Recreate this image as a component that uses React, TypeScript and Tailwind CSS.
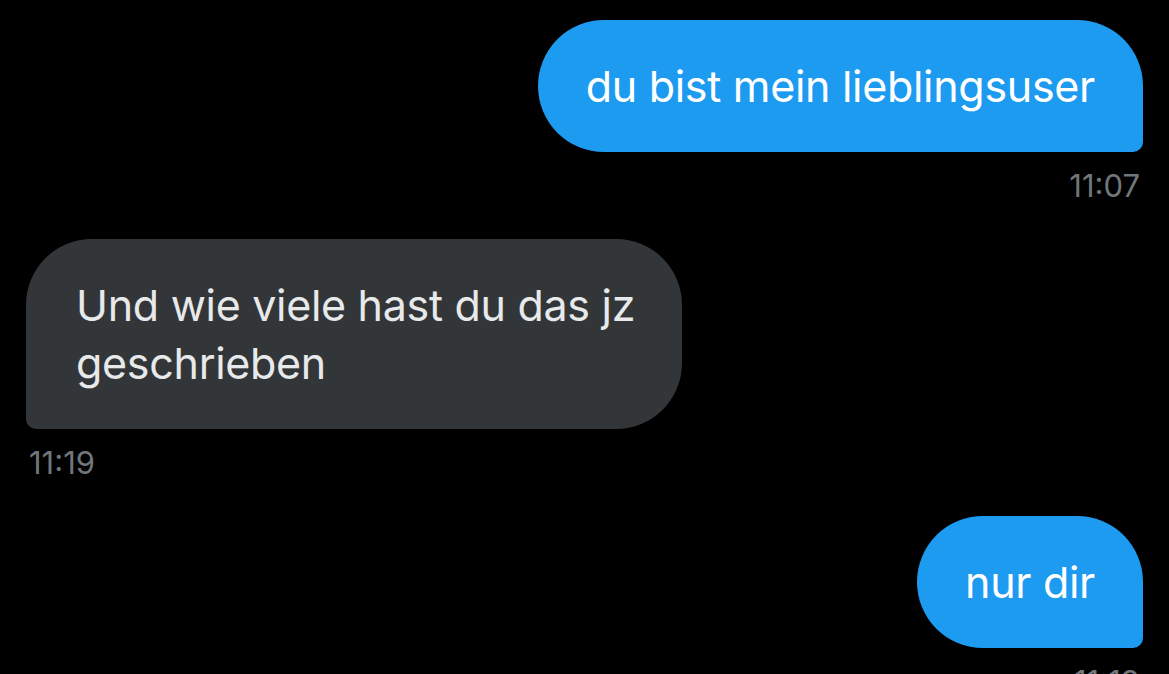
import React from 'react';

function Sent({ text, time }: { text: string; time: string }) {
  return (
    <div className="flex flex-col items-end">
      <div className="bg-[#1d9bf0] text-white rounded-[66px] rounded-br-[10px] px-[48px] py-[37px] text-[43px] leading-[58px] tracking-[-0.3px]">
        {text}
      </div>
      <div className="text-[#71767b] text-[31px] leading-[40px] mt-[14px] pr-[3px]">{time}</div>
    </div>
  );
}

function Received({ text, time }: { text: string; time: string }) {
  return (
    <div className="flex flex-col items-start">
      <div className="bg-[#333639] text-[#e7e9ea] rounded-[66px] rounded-bl-[10px] pl-[50px] pr-[36px] py-[37px] text-[43px] leading-[58px] tracking-[-0.3px] max-w-[656px]">
        {text}
      </div>
      <div className="text-[#71767b] text-[31px] leading-[40px] mt-[14px] pl-[3px]">{time}</div>
    </div>
  );
}

export default function App() {
  return (
    <div
      className="w-[1169px] h-[674px] overflow-hidden bg-black px-[26px] pt-[20px] flex flex-col gap-[33px]"
      style={{ fontFamily: 'Inter, "Noto Sans", sans-serif' }}
    >
      <Sent text="du bist mein lieblingsuser" time="11:07" />
      <Received text="Und wie viele hast du das jz geschrieben" time="11:19" />
      <Sent text="nur dir" time="11:19" />
    </div>
  );
}
